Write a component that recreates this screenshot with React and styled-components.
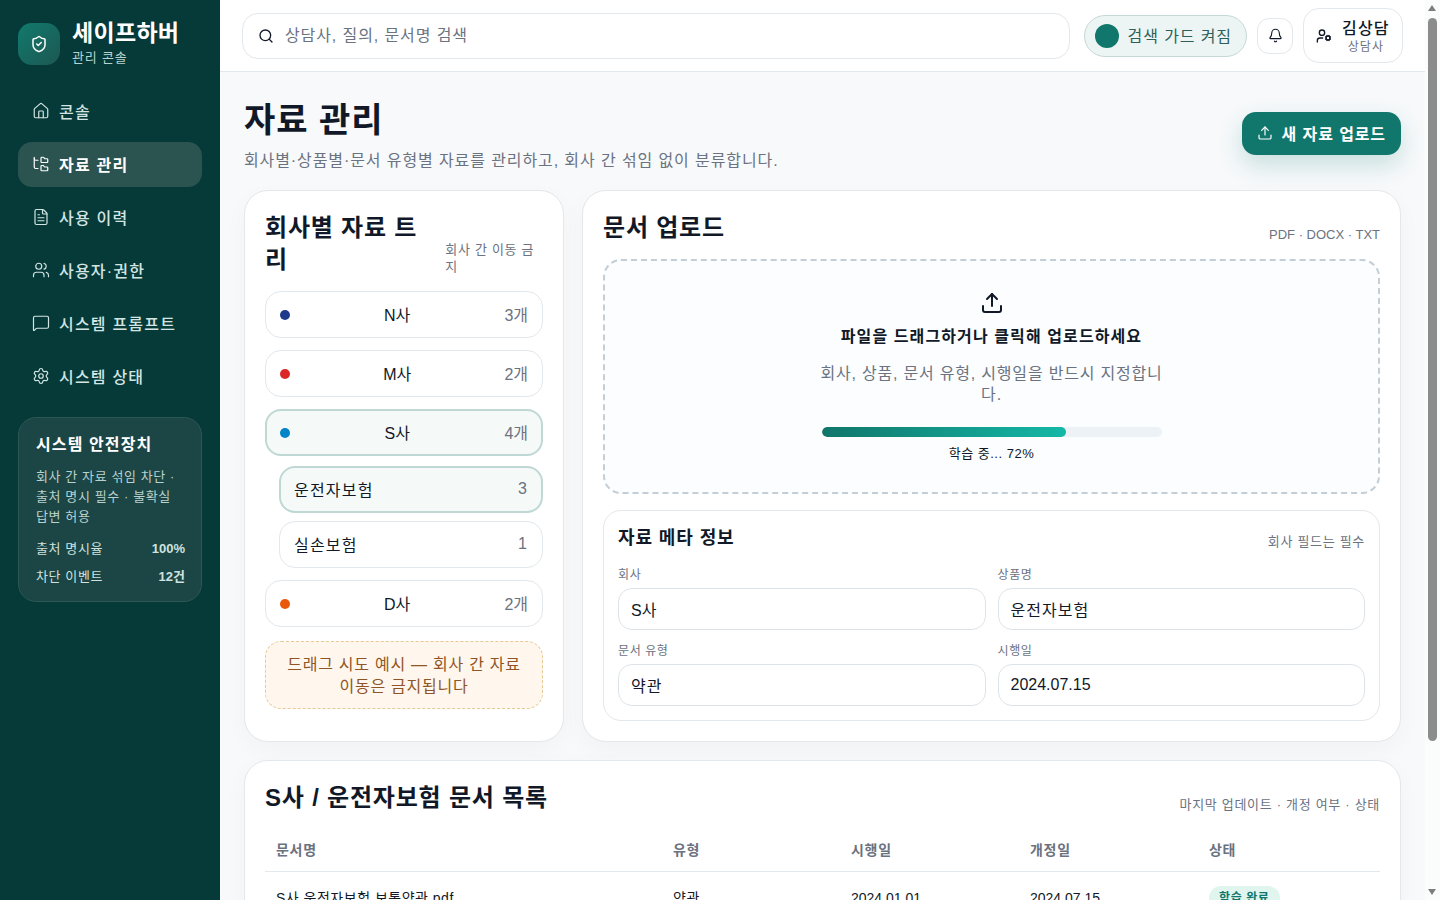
import React from "react";
import styled, { createGlobalStyle } from "styled-components";
import {
  Bell,
  FileText,
  FolderTree,
  House,
  MessageSquare,
  Search,
  Settings,
  ShieldCheck,
  Upload,
  UserCog,
  Users,
} from "lucide-react";

const NAV = [
  { label: "콘솔", icon: House },
  { label: "자료 관리", icon: FolderTree, active: true },
  { label: "사용 이력", icon: FileText },
  { label: "사용자·권한", icon: Users },
  { label: "시스템 프롬프트", icon: MessageSquare },
  { label: "시스템 상태", icon: Settings },
];

const DOCS = [
  { name: "S사 운전자보험 보통약관.pdf", type: "약관", start: "2024.01.01", revised: "2024.07.15", status: "학습 완료" },
  { name: "S사 운전자보험 특별약관.pdf", type: "약관", start: "2024.01.01", revised: "2024.07.15", status: "학습 완료" },
  { name: "S사 운전자보험 상품요약서.docx", type: "요약서", start: "2024.07.15", revised: "-", status: "학습 완료" },
];

const GlobalStyle = createGlobalStyle`
  * { box-sizing: border-box; }
  html, body { margin: 0; padding: 0; }
  body {
    background: #f7f9fb;
    color: #111827;
    font-family: "Liberation Sans", "Noto Sans CJK KR", sans-serif;
  }
`;

const Shell = styled.div`
  display: grid;
  grid-template-columns: 220px minmax(0, 1fr);
  min-height: 100vh;
  padding-right: 15px;
`;

/* the window's scrollbar, drawn since the headless browser hides its own */
const ScrollTrack = styled.div`
  position: fixed;
  top: 0;
  right: 0;
  bottom: 0;
  z-index: 10;
  width: 15px;
  padding: 18px 3px;
  background: #fbfcfc;
`;

const ScrollThumb = styled.div`
  height: 723px;
  border-radius: 5px;
  background: #8c8c8c;
`;

const ScrollArrow = styled.span`
  position: absolute;
  left: 3px;
  ${(p) => (p.$down ? "bottom: 5px;" : "top: 5px;")}
  border-left: 4.5px solid transparent;
  border-right: 4.5px solid transparent;
  ${(p) => (p.$down ? "border-top: 6px solid #7d7d7d;" : "border-bottom: 6px solid #7d7d7d;")}
`;

const Sidebar = styled.aside`
  position: sticky;
  top: 0;
  align-self: start;
  height: 100vh;
  padding: 21px 18px;
  background: #053a39;
  color: #fff;
`;

const Brand = styled.div`
  display: flex;
  align-items: center;
  gap: 12px;
  margin-bottom: 23px;
`;

const BrandMark = styled.div`
  display: flex;
  align-items: center;
  justify-content: center;
  width: 42px;
  height: 42px;
  border-radius: 14px;
  background: linear-gradient(135deg, #127a6d, #1c5752);
`;

const BrandName = styled.div`
  font-size: 23px;
  font-weight: 700;
  line-height: 24px;
  letter-spacing: 0.3px;
`;

const BrandSub = styled.div`
  margin-top: 5px;
  font-size: 13px;
  line-height: 16px;
  letter-spacing: 0.8px;
  color: #b8d3cf;
`;

const NavList = styled.nav`
  display: flex;
  flex-direction: column;
  gap: 8px;
`;

const NavItem = styled.div`
  display: flex;
  align-items: center;
  gap: 9px;
  height: 45px;
  padding: 0 14px 2px;
  border-radius: 14px;
  font-size: 16px;
  font-weight: ${(p) => (p.$active ? 700 : 500)};
  letter-spacing: 1.2px;
  background: ${(p) => (p.$active ? "#2b5350" : "transparent")};
  color: ${(p) => (p.$active ? "#ffffff" : "#d3e5e2")};
`;

const SafetyCard = styled.div`
  margin-top: 18px;
  padding: 16px 16px 14px 17px;
  border-radius: 18px;
  border: 1px solid #2c5754;
  background: #1c4645;
`;

const SafetyTitle = styled.div`
  font-size: 16px;
  font-weight: 700;
  line-height: 22px;
  letter-spacing: 1.1px;
`;

const SafetyText = styled.div`
  margin-top: 11px;
  font-size: 13px;
  line-height: 20px;
  letter-spacing: 0.6px;
  color: #b9d2ce;
`;

const SafetyRow = styled.div`
  display: flex;
  justify-content: space-between;
  margin-top: ${(p) => (p.$first ? "12px" : "8px")};
  font-size: 13px;
  line-height: 20px;
  letter-spacing: 0.6px;
  color: #cfe2df;
`;

const SafetyValue = styled.b`
  font-weight: 700;
  letter-spacing: 0;
`;

const Content = styled.div`
  min-width: 0;
`;

const Topbar = styled.header`
  position: sticky;
  top: 0;
  z-index: 5;
  display: flex;
  align-items: center;
  gap: 14px;
  height: 72px;
  padding: 0 22px;
  background: #fff;
  border-bottom: 1px solid #e2e8ec;
`;

const SearchBox = styled.label`
  flex: 1;
  display: flex;
  align-items: center;
  gap: 9px;
  height: 46px;
  padding: 0 15px;
  border: 1px solid #e2e8ec;
  border-radius: 16px;
  background: #fff;
  color: #111827;
`;

const SearchInput = styled.input`
  flex: 1;
  border: 0;
  outline: 0;
  background: transparent;
  font: inherit;
  font-size: 16px;
  letter-spacing: 0.9px;
  &::placeholder { color: #6b7280; opacity: 1; }
`;

const GuardPill = styled.div`
  display: flex;
  align-items: center;
  gap: 9px;
  height: 42px;
  padding: 0 14px 0 10px;
  border-radius: 21px;
  border: 1px solid #c5d9d7;
  background: #ecf5f4;
  font-size: 16px;
  letter-spacing: 0.9px;
  color: #2f5f5a;
`;

const GuardDot = styled.span`
  width: 24px;
  height: 24px;
  border-radius: 50%;
  background: #11766b;
`;

const GuardLabel = styled.span`
  margin-bottom: 2px;
`;

const BellButton = styled.button`
  display: flex;
  align-items: center;
  justify-content: center;
  width: 36px;
  height: 36px;
  margin-left: -4px;
  padding: 0;
  border: 1px solid #e2e8ec;
  border-radius: 12px;
  background: #fff;
  color: #111827;
`;

const Profile = styled.div`
  display: flex;
  align-items: center;
  gap: 10px;
  height: 55px;
  width: 100px;
  margin-left: -4px;
  padding: 0 12px;
  border: 1px solid #e2e8ec;
  border-radius: 16px;
  flex-shrink: 0;
`;

const ProfileText = styled.div`
  padding-top: 2px;
  text-align: center;
  white-space: nowrap;
`;

const ProfileName = styled.div`
  font-size: 16px;
  font-weight: 500;
  line-height: 20px;
  letter-spacing: 1.2px;
`;

const ProfileRole = styled.div`
  margin-top: 1px;
  font-size: 12px;
  line-height: 15px;
  letter-spacing: 1px;
  color: #6b7280;
`;

const Page = styled.main`
  display: flex;
  flex-direction: column;
  gap: 18px;
  padding: 24px;
`;

const PageHead = styled.div`
  display: flex;
  align-items: center;
  justify-content: space-between;
`;

const PageTitle = styled.h1`
  margin: 0;
  font-size: 34px;
  line-height: 48px;
  font-weight: 700;
  letter-spacing: 1px;
`;

const PageSub = styled.p`
  margin: 6px 0 0;
  font-size: 16px;
  line-height: 22px;
  letter-spacing: 0.9px;
  color: #6b7280;
`;

const UploadButton = styled.button`
  display: flex;
  align-items: center;
  gap: 9px;
  height: 43px;
  margin-bottom: 2px;
  padding: 0 15px;
  border: 0;
  border-radius: 14px;
  background: #11766b;
  color: #fff;
  font: inherit;
  font-size: 16px;
  font-weight: 700;
  letter-spacing: 0.9px;
  box-shadow: 0 10px 24px rgba(17, 118, 107, 0.2);
`;

const Columns = styled.div`
  display: grid;
  grid-template-columns: 320px minmax(0, 1fr);
  gap: 18px;
`;

const Card = styled.section`
  padding: 20px;
  border: 1px solid #e2e8ec;
  border-radius: 24px;
  background: #fff;
  box-shadow: 0 8px 24px rgba(15, 23, 42, 0.03);
`;

const CardHead = styled.div`
  display: flex;
  align-items: flex-end;
  justify-content: space-between;
  gap: 12px;
  margin-bottom: 16px;
`;

const CardTitle = styled.h2`
  margin: 0 0 -1px;
  padding-top: 1px;
  font-size: 24px;
  line-height: 32px;
  font-weight: 700;
  letter-spacing: 0.8px;
`;

const CardMeta = styled.span`
  font-size: 13px;
  line-height: 17px;
  letter-spacing: ${(p) => (p.$latin ? "0" : "0.7px")};
  color: #6b7280;
`;

const Tree = styled.div`
  display: flex;
  flex-direction: column;
  gap: 12px;
`;

const SubTree = styled.div`
  display: flex;
  flex-direction: column;
  gap: 8px;
  margin-left: 14px;
  margin-top: -2px;
`;

const TreeRow = styled.div`
  display: flex;
  align-items: center;
  justify-content: space-between;
  height: 47px;
  padding: 0 ${(p) => (p.$active ? "13px" : "14px")} 2px;
  border-radius: 16px;
  border: ${(p) => (p.$active ? "2px solid #bfd8d4" : "1px solid #e2e8ec")};
  background: ${(p) => (p.$active ? "#f5faf9" : "#fff")};
  font-size: 16px;
  letter-spacing: ${(p) => (p.$spaced ? "1.2px" : "0")};
`;

const Dot = styled.span`
  width: 10px;
  height: 10px;
  margin-top: 2px;
  border-radius: 50%;
  background: ${(p) => p.$color};
`;

const Count = styled.span`
  color: #6b7280;
`;

const DragNotice = styled.div`
  margin-top: 2px;
  padding: 12px 16px 10px;
  border: 1px dashed #e5c992;
  border-radius: 16px;
  background: #fff7ed;
  color: #8f5526;
  font-size: 16px;
  line-height: 22px;
  letter-spacing: 0.75px;
  text-align: center;
`;

const DropZone = styled.div`
  display: flex;
  flex-direction: column;
  align-items: center;
  height: 235px;
  padding-top: 30px;
  border: 2px dashed #c3ced6;
  border-radius: 18px;
  background: #fbfdfe;
`;

const DropTitle = styled.div`
  margin-top: 10px;
  font-size: 16px;
  font-weight: 700;
  line-height: 24px;
  letter-spacing: 1.1px;
`;

const DropText = styled.div`
  width: 350px;
  margin-top: 14px;
  font-size: 16px;
  line-height: 21px;
  letter-spacing: 0.8px;
  text-align: center;
  color: #6b7280;
`;

const Progress = styled.div`
  width: 340px;
  height: 10px;
  margin-top: 22px;
  border-radius: 5px;
  background: #edf2f6;
  overflow: hidden;
`;

const ProgressFill = styled.div`
  height: 100%;
  border-radius: 5px;
  background: linear-gradient(90deg, #11766b, #14b8a6);
`;

const ProgressLabel = styled.div`
  margin-top: 8px;
  font-size: 13px;
  line-height: 18px;
  letter-spacing: 0.5px;
`;

const MetaPanel = styled.div`
  margin-top: 16px;
  padding: 15px 14px 14px;
  border: 1px solid #e2e8ec;
  border-radius: 18px;
`;

const MetaTitle = styled.h3`
  margin: 0;
  font-size: 18px;
  line-height: 24px;
  font-weight: 700;
  letter-spacing: 0.9px;
`;

const MetaGrid = styled.div`
  display: grid;
  grid-template-columns: 1fr 1fr;
  gap: 12px;
`;

const Field = styled.label`
  display: block;
`;

const FieldLabel = styled.div`
  margin-bottom: 5px;
  padding-top: 1px;
  font-size: 12px;
  line-height: 16px;
  letter-spacing: 0.6px;
  color: #6b7280;
`;

const FieldInput = styled.input`
  width: 100%;
  height: 42px;
  padding: 0 12px;
  border: 1px solid #dde4e9;
  border-radius: 14px;
  background: #fff;
  color: #111827;
  font: inherit;
  font-size: 16px;
  letter-spacing: ${(p) => (p.$latin ? "0" : "1px")};
  outline: 0;
`;

const Table = styled.table`
  width: 100%;
  border-collapse: collapse;
  table-layout: fixed;
`;

const Th = styled.th`
  width: ${(p) => p.$width};
  padding: 11px;
  border-bottom: 1px solid #e2e8ec;
  font-size: 14px;
  font-weight: 700;
  line-height: 20px;
  letter-spacing: 0.7px;
  text-align: left;
  color: #6b7280;
`;

const Td = styled.td`
  padding: 14px 11px;
  border-bottom: 1px solid #eef2f5;
  font-size: 14px;
  line-height: 22px;
  letter-spacing: ${(p) => (p.$latin ? "0" : "0.5px")};
`;

const Badge = styled.span`
  display: inline-block;
  padding: 2px 10px;
  border-radius: 12px;
  background: #dff5ee;
  color: #11766b;
  font-size: 12px;
  font-weight: 700;
  line-height: 20px;
  letter-spacing: 0.6px;
`;

export default function App() {
  return (
    <Shell>
      <GlobalStyle />
      <ScrollTrack>
        <ScrollArrow />
        <ScrollThumb />
        <ScrollArrow $down />
      </ScrollTrack>
      <Sidebar>
        <Brand>
          <BrandMark>
            <ShieldCheck size={18} strokeWidth={2} />
          </BrandMark>
          <div>
            <BrandName>세이프하버</BrandName>
            <BrandSub>관리 콘솔</BrandSub>
          </div>
        </Brand>
        <NavList>
          {NAV.map(({ label, icon: Icon, active }) => (
            <NavItem key={label} $active={active}>
              <Icon size={18} strokeWidth={1.6} />
              {label}
            </NavItem>
          ))}
        </NavList>
        <SafetyCard>
          <SafetyTitle>시스템 안전장치</SafetyTitle>
          <SafetyText>회사 간 자료 섞임 차단 · 출처 명시 필수 · 불확실 답변 허용</SafetyText>
          <SafetyRow $first>
            출처 명시율 <SafetyValue>100%</SafetyValue>
          </SafetyRow>
          <SafetyRow>
            차단 이벤트 <SafetyValue>12건</SafetyValue>
          </SafetyRow>
        </SafetyCard>
      </Sidebar>

      <Content>
        <Topbar>
          <SearchBox>
            <Search size={16} strokeWidth={2} />
            <SearchInput placeholder="상담사, 질의, 문서명 검색" />
          </SearchBox>
          <GuardPill>
            <GuardDot />
            <GuardLabel>검색 가드 켜짐</GuardLabel>
          </GuardPill>
          <BellButton aria-label="알림">
            <Bell size={15} strokeWidth={1.8} />
          </BellButton>
          <Profile>
            <UserCog size={16} strokeWidth={2} />
            <ProfileText>
              <ProfileName>김상담</ProfileName>
              <ProfileRole>상담사</ProfileRole>
            </ProfileText>
          </Profile>
        </Topbar>

        <Page>
          <PageHead>
            <div>
              <PageTitle>자료 관리</PageTitle>
              <PageSub>회사별·상품별·문서 유형별 자료를 관리하고, 회사 간 섞임 없이 분류합니다.</PageSub>
            </div>
            <UploadButton>
              <Upload size={16} strokeWidth={1.8} />새 자료 업로드
            </UploadButton>
          </PageHead>

          <Columns>
            <Card>
              <CardHead>
                <CardTitle>회사별 자료 트리</CardTitle>
                <CardMeta>회사 간 이동 금지</CardMeta>
              </CardHead>
              <Tree>
                <TreeRow>
                  <Dot $color="#1e3a8a" />N사<Count>3개</Count>
                </TreeRow>
                <TreeRow>
                  <Dot $color="#dc2626" />M사<Count>2개</Count>
                </TreeRow>
                <TreeRow $active>
                  <Dot $color="#0284c7" />S사<Count>4개</Count>
                </TreeRow>
                <SubTree>
                  <TreeRow $active $spaced>
                    운전자보험<Count>3</Count>
                  </TreeRow>
                  <TreeRow $spaced>
                    실손보험<Count>1</Count>
                  </TreeRow>
                </SubTree>
                <TreeRow>
                  <Dot $color="#ea580c" />D사<Count>2개</Count>
                </TreeRow>
                <DragNotice>드래그 시도 예시 — 회사 간 자료 이동은 금지됩니다</DragNotice>
              </Tree>
            </Card>

            <Card>
              <CardHead>
                <CardTitle>문서 업로드</CardTitle>
                <CardMeta $latin>PDF · DOCX · TXT</CardMeta>
              </CardHead>
              <DropZone>
                <Upload size={24} strokeWidth={2} />
                <DropTitle>파일을 드래그하거나 클릭해 업로드하세요</DropTitle>
                <DropText>회사, 상품, 문서 유형, 시행일을 반드시 지정합니다.</DropText>
                <Progress>
                  <ProgressFill style={{ width: "72%" }} />
                </Progress>
                <ProgressLabel>학습 중... 72%</ProgressLabel>
              </DropZone>
              <MetaPanel>
                <CardHead>
                  <MetaTitle>자료 메타 정보</MetaTitle>
                  <CardMeta>회사 필드는 필수</CardMeta>
                </CardHead>
                <MetaGrid>
                  <Field>
                    <FieldLabel>회사</FieldLabel>
                    <FieldInput $latin defaultValue="S사" />
                  </Field>
                  <Field>
                    <FieldLabel>상품명</FieldLabel>
                    <FieldInput defaultValue="운전자보험" />
                  </Field>
                  <Field>
                    <FieldLabel>문서 유형</FieldLabel>
                    <FieldInput defaultValue="약관" />
                  </Field>
                  <Field>
                    <FieldLabel>시행일</FieldLabel>
                    <FieldInput $latin defaultValue="2024.07.15" />
                  </Field>
                </MetaGrid>
              </MetaPanel>
            </Card>
          </Columns>

          <Card>
            <CardHead>
              <CardTitle>S사 / 운전자보험 문서 목록</CardTitle>
              <CardMeta>마지막 업데이트 · 개정 여부 · 상태</CardMeta>
            </CardHead>
            <Table>
              <thead>
                <tr>
                  <Th $width="397px">문서명</Th>
                  <Th $width="178px">유형</Th>
                  <Th $width="179px">시행일</Th>
                  <Th $width="179px">개정일</Th>
                  <Th>상태</Th>
                </tr>
              </thead>
              <tbody>
                {DOCS.map((doc) => (
                  <tr key={doc.name}>
                    <Td>{doc.name}</Td>
                    <Td>{doc.type}</Td>
                    <Td $latin>{doc.start}</Td>
                    <Td $latin>{doc.revised}</Td>
                    <Td>
                      <Badge>{doc.status}</Badge>
                    </Td>
                  </tr>
                ))}
              </tbody>
            </Table>
          </Card>
        </Page>
      </Content>
    </Shell>
  );
}
